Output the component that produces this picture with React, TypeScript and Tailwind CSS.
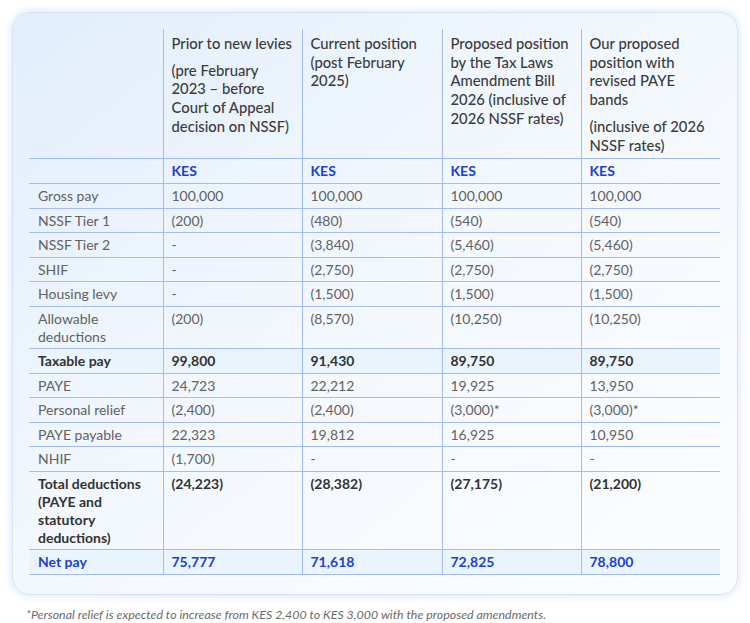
import React from "react";

// rows of the comparison table: label, four values, style
type Row = {
  label: string;
  values: string[];
  kind?: "bold" | "net";
};

const rows: Row[] = [
  { label: "Gross pay", values: ["100,000", "100,000", "100,000", "100,000"] },
  { label: "NSSF Tier 1", values: ["(200)", "(480)", "(540)", "(540)"] },
  { label: "NSSF Tier 2", values: ["-", "(3,840)", "(5,460)", "(5,460)"] },
  { label: "SHIF", values: ["-", "(2,750)", "(2,750)", "(2,750)"] },
  { label: "Housing levy", values: ["-", "(1,500)", "(1,500)", "(1,500)"] },
  { label: "Allowable deductions", values: ["(200)", "(8,570)", "(10,250)", "(10,250)"] },
  { label: "Taxable pay", values: ["99,800", "91,430", "89,750", "89,750"], kind: "bold" },
  { label: "PAYE", values: ["24,723", "22,212", "19,925", "13,950"] },
  { label: "Personal relief", values: ["(2,400)", "(2,400)", "(3,000)*", "(3,000)*"] },
  { label: "PAYE payable", values: ["22,323", "19,812", "16,925", "10,950"] },
  { label: "NHIF", values: ["(1,700)", "-", "-", "-"] },
  { label: "Total deductions (PAYE and statutory deductions)", values: ["(24,223)", "(28,382)", "(27,175)", "(21,200)"], kind: "bold" },
  { label: "Net pay", values: ["75,777", "71,618", "72,825", "78,800"], kind: "net" },
];

const App = () => {
  const rowClass = (kind?: string) => {
    if (kind === "net") return "bg-[#eaf4fc] font-bold text-[#1d3fd3]";
    if (kind === "bold") return "font-bold text-[#333]";
    return "text-[#626262]";
  };
  const rowBg = (label: string) => (label === "Taxable pay" ? "bg-[#eaf4fc]" : "");

  return (
    <div className="w-[750px] h-[623px] bg-white p-3 font-['Lato','Noto_Sans',sans-serif]">
      <div className="rounded-[18px] border-[1.5px] border-[#d6e2fa] bg-gradient-to-br from-[#e2eefc] via-[#f3f8fd] to-[#fcfdff] pt-[16px] pb-[19px] pl-[16px] pr-[16px] shadow-[0_0_10px_rgba(140,165,235,0.35)]">
        <table className="border-collapse text-[14px] w-[691px] table-fixed">
          <colgroup>
            <col className="w-[134px]" />
            <col className="w-[139px]" />
            <col className="w-[140px]" />
            <col className="w-[139px]" />
            <col className="w-[139px]" />
          </colgroup>
          <thead>
            <tr className="border-b border-[#a6bbf0] text-[#3c3c3c] align-top text-[14.8px] leading-[18.7px]">
              <th></th>
              <th className="border-l border-[#a6bbf0] pl-2 pr-2 pt-[5px] pb-1 text-left font-medium">
                <p>Prior to new levies</p>
                <p className="mt-2">(pre February 2023 – before Court of Appeal decision on NSSF)</p>
              </th>
              <th className="border-l border-[#a6bbf0] pl-2 pr-2 pt-[5px] pb-1 text-left font-medium">
                <p>Current position (post February 2025)</p>
              </th>
              <th className="border-l border-[#a6bbf0] pl-2 pr-2 pt-[5px] pb-1 text-left font-medium">
                <p>Proposed position by the Tax Laws Amendment Bill 2026 (inclusive of 2026 NSSF rates)</p>
              </th>
              <th className="border-l border-[#a6bbf0] pl-2 pr-2 pt-[5px] pb-1 text-left font-medium">
                <p>Our proposed position with revised PAYE bands</p>
                <p className="mt-2">(inclusive of 2026 NSSF rates)</p>
              </th>
            </tr>
          </thead>
          <tbody className="leading-[18px]">
            <tr className="border-b border-[#a6bbf0] font-bold text-[#1d3fd3]">
              <td className="pt-[3px] pb-[3px]"></td>
              {[0, 1, 2, 3].map((i) => (
                <td key={i} className="border-l border-[#a6bbf0] px-2 pt-[3px] pb-[3px]">KES</td>
              ))}
            </tr>
            {rows.map((r) => (
              <tr key={r.label} className={`border-b border-[#a6bbf0] align-top ${rowClass(r.kind)} ${rowBg(r.label)}`}>
                <td className="pl-[9px] pr-2 pt-[3px] pb-[2.5px]">{r.label}</td>
                {r.values.map((v, i) => (
                  <td key={i} className="border-l border-[#a6bbf0] px-2 pt-[3px] pb-[2.5px]">{v}</td>
                ))}
              </tr>
            ))}
          </tbody>
        </table>
      </div>
      <p className="mt-[12px] pl-[14px] text-[12.4px] leading-[16px] italic text-[#6a6a6a]">
        *Personal relief is expected to increase from KES 2,400 to KES 3,000 with the proposed amendments.
      </p>
    </div>
  );
};

export default App;
